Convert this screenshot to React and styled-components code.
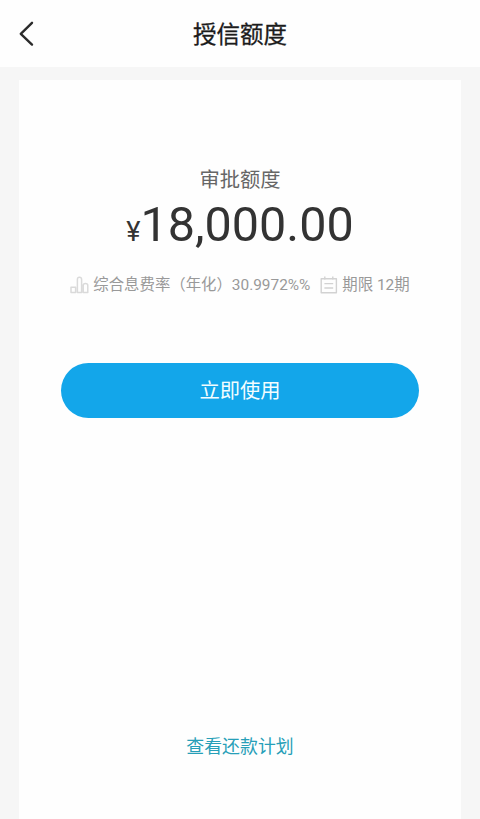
import React from 'react';
import styled, { createGlobalStyle } from 'styled-components';

const App = () => (
  <Page>
    <GlobalStyle />
    <Header>
      <BackButton aria-label="返回">
        <BackIcon />
      </BackButton>
      <Title>授信额度</Title>
    </Header>
    <Card>
      <Label>审批额度</Label>
      <Amount>
        <Currency>¥</Currency>18,000.00
      </Amount>
      <Meta>
        <ChartIcon />
        <MetaText $gap="9px">综合息费率（年化）30.9972%%</MetaText>
        <CalendarIcon />
        <MetaText>期限 12期</MetaText>
      </Meta>
      <UseButton>立即使用</UseButton>
      <PlanLink>查看还款计划</PlanLink>
    </Card>
  </Page>
);

const BackIcon = () => (
  <svg width="16" height="28" viewBox="0 0 16 28" fill="none">
    <path
      d="M14 2.8L2.8 13.8L14 24.6"
      stroke="#2b2b2b"
      strokeWidth="2.4"
      strokeLinecap="round"
      strokeLinejoin="round"
    />
  </svg>
);

const ChartIcon = () => (
  <svg width="20" height="20" viewBox="0 0 20 20" fill="none">
    <path
      d="M1 17.5V12.2H5.6V17.5ZM7.4 17.5V4.4Q7.4 2.2 9.4 2.2Q11.6 2.2 11.6 4.4V17.5ZM13.2 17.5V10.4Q13.2 8.6 15.4 8.6Q17.8 8.6 17.8 10.4V17.5Z"
      stroke="#dadada"
      strokeWidth="1.5"
      strokeLinejoin="round"
    />
  </svg>
);

const CalendarIcon = () => (
  <svg width="20" height="20" viewBox="0 0 20 20" fill="none">
    <path
      d="M2.2 3.8H17.4V17.8H2.2ZM5.8 1.6V4.8M13.8 1.6V4.8M5.4 8.6H14.2M5.4 13H14.2"
      stroke="#d2d2d2"
      strokeWidth="1.4"
      strokeLinejoin="round"
    />
  </svg>
);

export default App;

const GlobalStyle = createGlobalStyle`
  * {
    box-sizing: border-box;
  }
  body {
    margin: 0;
    background-color: #f6f6f6;
    font-family: Roboto, 'Noto Sans CJK SC', sans-serif;
  }
`;

const Page = styled.div`
  height: 819px;
  display: flex;
  flex-direction: column;
  background-color: #f6f6f6;
  overflow: hidden;
`;

const Header = styled.header`
  height: 67px;
  flex: none;
  display: grid;
  grid-template-columns: 60px 1fr 60px;
  align-items: center;
  background-color: #fefefe;
`;

const BackButton = styled.button`
  display: flex;
  padding: 0 0 0 18px;
  border: none;
  background: none;
`;

const Title = styled.h1`
  margin: 2px 0 0;
  font-size: 23.5px;
  line-height: 34px;
  font-weight: 400;
  -webkit-text-stroke: 0.3px #1c1c1c;
  text-align: center;
  color: #1c1c1c;
`;

const Card = styled.main`
  flex: 1;
  margin: 13px 19px 0;
  padding: 85px 42px 0;
  display: flex;
  flex-direction: column;
  align-items: center;
  background-color: #fefefe;
`;

const Label = styled.div`
  font-size: 20.3px;
  line-height: 30px;
  color: #666;
`;

const Amount = styled.div`
  height: 58px;
  margin-top: 1px;
  font-size: 48.5px;
  line-height: 58px;
  white-space: nowrap;
  color: #333;
`;

const Currency = styled.span`
  font-size: 27px;
  line-height: 1;
`;

const Meta = styled.div`
  height: 24px;
  margin-top: 19px;
  display: flex;
  align-items: center;
  white-space: nowrap;
`;

const MetaText = styled.span`
  margin-left: 3px;
  margin-right: ${(props) => props.$gap || 0};
  font-size: 15.4px;
  line-height: 24px;
  color: #999;
`;

const UseButton = styled.button`
  width: 358px;
  height: 55px;
  flex: none;
  margin-top: 66px;
  padding: 0 0 4px;
  border: none;
  border-radius: 28px;
  background-color: #13a6ea;
  font-family: inherit;
  font-size: 20.3px;
  color: #f2fdff;
`;

const PlanLink = styled.a`
  margin-top: 316px;
  font-size: 17.9px;
  line-height: 26px;
  color: #279fb8;
`;
